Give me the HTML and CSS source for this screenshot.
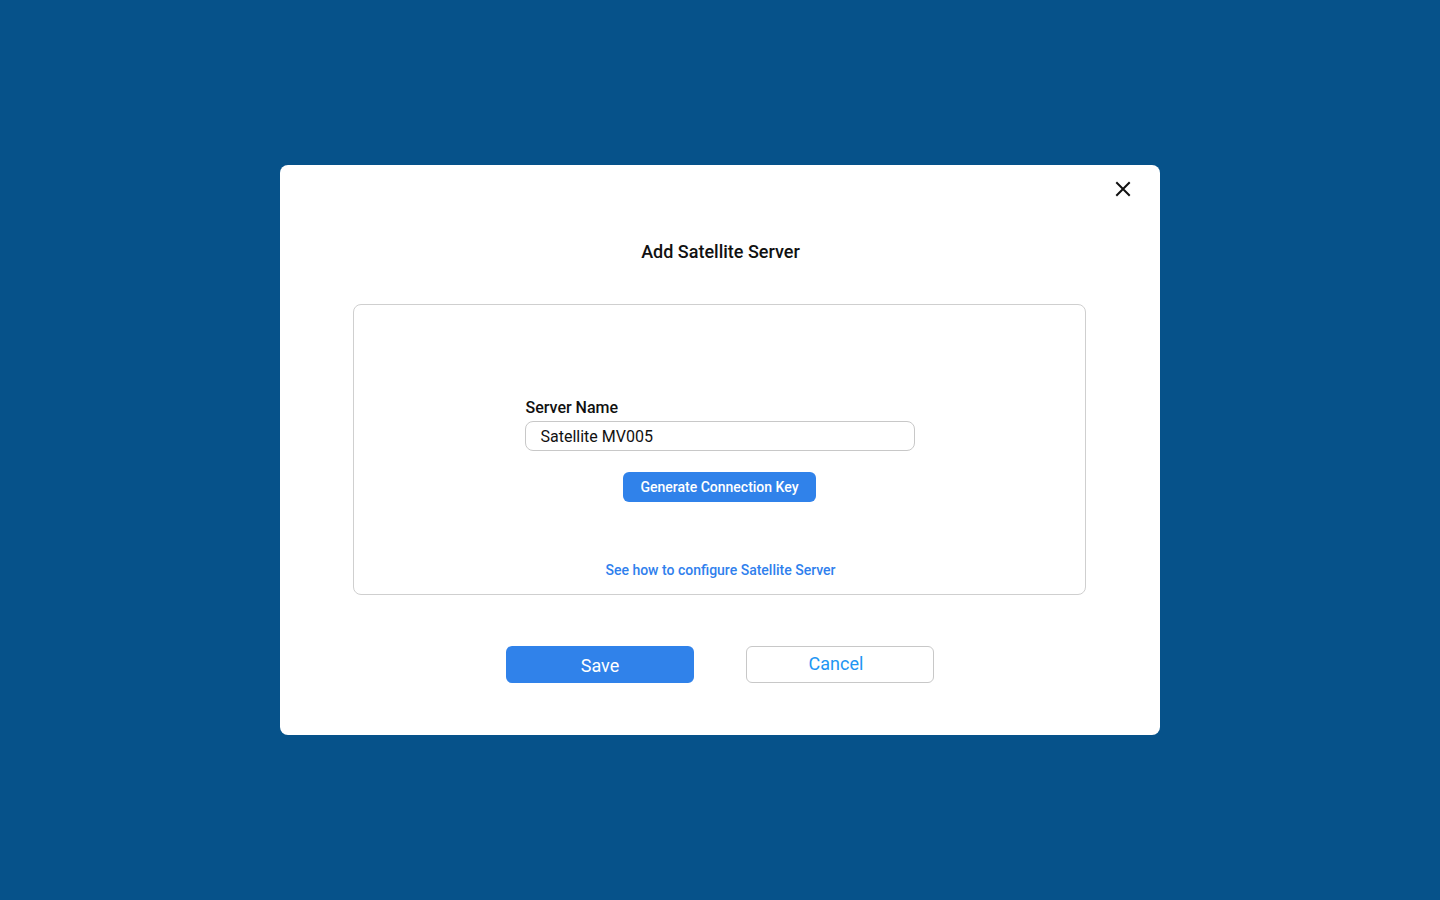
FILE: index.html
```html
<!DOCTYPE html>
<html lang="en">
<head>
<meta charset="utf-8">
<title>Add Satellite Server</title>
<link rel="stylesheet" href="styles.css">
</head>
<body>
<div class="backdrop">
  <div class="modal">
    <button class="close" aria-label="Close">
      <svg width="16" height="16" viewBox="0 0 16 16"><path d="M2 2 L14 14 M14 2 L2 14" stroke="#111" stroke-width="2" stroke-linecap="square" fill="none"/></svg>
    </button>
    <h1 class="title">Add Satellite Server</h1>
    <div class="panel">
      <div class="field">
        <label class="label">Server Name</label>
        <div class="input">Satellite MV005</div>
      </div>
      <button class="gen">Generate Connection Key</button>
      <a class="link">See how to configure Satellite Server</a>
    </div>
    <div class="actions">
      <button class="btn save">Save</button>
      <button class="btn cancel">Cancel</button>
    </div>
  </div>
</div>
</body>
</html>
```
FILE: styles.css
```css
* { box-sizing: border-box; }
html, body { margin: 0; padding: 0; }
body {
  background: #06528a;
  font-family: Roboto, "Liberation Sans", sans-serif;
  width: 1440px;
  height: 900px;
}
.backdrop {
  height: 900px;
  display: flex;
  align-items: center;
  justify-content: center;
}
.modal {
  position: relative;
  width: 880px;
  height: 570px;
  background: #fff;
  border-radius: 8px;
  padding: 76px 74px 52px 73px;
  display: flex;
  flex-direction: column;
  align-items: stretch;
}
.close {
  position: absolute;
  top: 16px;
  right: 29px;
  width: 16px;
  height: 16px;
  padding: 0;
  border: 0;
  background: none;
  display: flex;
}
.title {
  margin: 0 0 41px;
  padding-left: 2px;
  text-align: center;
  font-size: 18px;
  line-height: 22px;
  font-weight: 500;
  color: #111;
}
.panel {
  height: 291px;
  flex-shrink: 0;
  border: 1px solid #cfcfcf;
  border-radius: 8px;
  padding: 93px 0 0;
  display: flex;
  flex-direction: column;
  align-items: center;
}
.field {
  width: 390px;
  display: flex;
  flex-direction: column;
}
.label {
  font-size: 16px;
  line-height: 19px;
  font-weight: 500;
  color: #111;
  margin-bottom: 4px;
  padding-left: 1px;
}
.input {
  height: 30px;
  border: 1px solid #c8c8c8;
  border-radius: 8px;
  padding: 1px 15px 0;
  font-size: 16px;
  line-height: 28px;
  color: #111;
}
.gen {
  margin-top: 21px;
  width: 193px;
  height: 30px;
  border: 0;
  border-radius: 6px;
  background: #3082ea;
  color: #fff;
  font-family: inherit;
  font-size: 14px;
  font-weight: 500;
  padding: 0;
}
.link {
  margin-top: 60px;
  padding-left: 2px;
  font-size: 14px;
  line-height: 17px;
  font-weight: 500;
  color: #2f80ed;
}
.actions {
  margin-top: 51px;
  display: flex;
  justify-content: center;
  gap: 52px;
  padding-left: 1px;
}
.btn {
  width: 188px;
  height: 37px;
  border-radius: 6px;
  font-family: inherit;
  font-size: 18px;
  font-weight: 400;
  padding: 0;
}
.save {
  background: #3082ea;
  color: #fff;
  border: 0;
  padding-top: 2px;
}
.cancel {
  background: #fff;
  border: 1px solid #c8c8c8;
  color: #2196f3;
  padding-right: 8px;
  padding-bottom: 2px;
}
```
